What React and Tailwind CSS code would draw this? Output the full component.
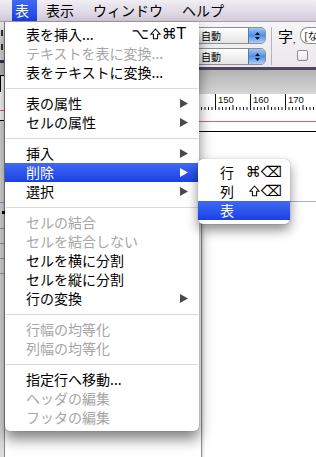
import React from "react";

function Shift({ white }) {
  return (
    <svg width="11" height="12" viewBox="0 0 11 12" className="inline-block mx-[1px] -mt-[2px] align-middle">
      <path d="M5.5 1 L10.3 6.3 H7.6 V10.8 H3.4 V6.3 H0.7 Z" fill="none" stroke={white ? "#fff" : "#111"} strokeWidth="1.1" strokeLinejoin="round" />
    </svg>
  );
}

const menuItems = [
  { label: "表を挿入...", shortcut: ["⌥", "shift", "⌘T"] },
  { label: "テキストを表に変換...", disabled: true },
  { label: "表をテキストに変換..." },
  "sep",
  { label: "表の属性", sub: true },
  { label: "セルの属性", sub: true },
  "sep",
  { label: "挿入", sub: true },
  { label: "削除", sub: true, active: true },
  { label: "選択", sub: true },
  "sep",
  { label: "セルの結合", disabled: true },
  { label: "セルを結合しない", disabled: true },
  { label: "セルを横に分割" },
  { label: "セルを縦に分割" },
  { label: "行の変換", sub: true },
  "sep",
  { label: "行幅の均等化", disabled: true },
  { label: "列幅の均等化", disabled: true },
  "sep",
  { label: "指定行へ移動..." },
  { label: "ヘッダの編集", disabled: true },
  { label: "フッタの編集", disabled: true },
];

const subItems = [
  { label: "行", shortcut: ["⌘⌫"] },
  { label: "列", shortcut: ["shift", "⌫"] },
  { label: "表", active: true },
];

function Shortcut({ keys, className }) {
  return (
    <span className={`font-['DejaVu_Sans',sans-serif] text-[15px] whitespace-nowrap ${className || ""}`}>
      {keys.map((k, i) => (k === "shift" ? <Shift key={i} /> : <span key={i}>{k}</span>))}
    </span>
  );
}

function Arrow({ white }) {
  return (
    <svg width="8" height="9" viewBox="0 0 8 9" className="shrink-0">
      <polygon points="0,0 8,4.5 0,9" fill={white ? "#ffffff" : "#4a4a4a"} />
    </svg>
  );
}

function MenuRow({ item }) {
  const color = item.active
    ? "text-white bg-gradient-to-b from-[#4169f3] to-[#1b3fe4]"
    : item.disabled
    ? "text-[#a6a6a6]"
    : "text-black";
  return (
    <div className={`h-[19px] flex items-center pl-[21px] pr-[11px] ${color}`}>
      <span className="flex-1 whitespace-nowrap">{item.label}</span>
      {item.shortcut && <Shortcut keys={item.shortcut} className="pr-[2px]" />}
      {item.sub && <Arrow white={item.active} />}
    </div>
  );
}

function Popup({ label }) {
  return (
    <div className="h-[17px] w-[76px] flex items-stretch rounded-[5px] border border-[#8e8e8e] bg-gradient-to-b from-white to-[#e4e4e4] overflow-hidden">
      <span className="flex-1 pl-[10px] text-[10px] leading-[15px]">{label}</span>
      <div className="w-[17px] flex flex-col items-center justify-center gap-[2px] bg-gradient-to-b from-[#9ec4f4] via-[#4f8fe6] to-[#a9d0f7] border-l border-[#5a79a8]">
        <svg width="5" height="3" viewBox="0 0 5 3"><polygon points="0,3 2.5,0 5,3" fill="#111" /></svg>
        <svg width="5" height="3" viewBox="0 0 5 3"><polygon points="0,0 5,0 2.5,3" fill="#111" /></svg>
      </div>
    </div>
  );
}

function Ruler() {
  const ticks = [];
  for (let i = 0; i < 90; i++) {
    const x = i * 3.5 + 0.5;
    const major = i % 10 === 0;
    const mid = i % 10 === 5;
    ticks.push(
      <line key={i} x1={x} x2={x} y1={major ? 0 : mid ? 11 : 13} y2={16} stroke="#111" strokeWidth="1" />
    );
  }
  // only the labels that show right of the open menu
  const labels = [6, 7, 8].map((i) => (
    <text key={i} x={i * 35 + 3} y={9} fontSize="9.5" fontFamily="Liberation Sans, Arial, sans-serif" fill="#111">
      {90 + i * 10}
    </text>
  ));
  return (
    <svg width="311" height="16" className="block bg-white">
      {ticks}
      {labels}
    </svg>
  );
}

export default function App() {
  return (
    <div className="relative w-[316px] h-[457px] overflow-hidden bg-white font-['Noto_Sans_CJK_JP','Noto_Sans',sans-serif] text-[14px] leading-[19px]">
      {/* MENU BAR */}
      <div className="h-[22px] flex items-stretch bg-gradient-to-b from-[#f1eef4] to-[#d3ccdb] border-b border-[#a8a0b2]">
        <div className="w-[12px]" />
        <div className="pl-[3px] pr-[8px] flex items-center bg-gradient-to-b from-[#4169f3] to-[#1b3fe4] text-white">表</div>
        <div className="pl-[9px] flex items-center">表示</div>
        <div className="pl-[19px] flex items-center">ウィンドウ</div>
        <div className="pl-[19px] flex items-center">ヘルプ</div>
      </div>

      {/* DOCUMENT WINDOW BEHIND */}
      <div className="flex h-[435px]">
        {/* left strip */}
        <div className="w-[5px] flex flex-col bg-[#dcdcdc] border-r border-[#8c8c8c]">
          <div className="h-[8px] bg-[#e9e9e9]" />
          <div className="h-[6px] mx-[1px] border-l-2 border-[#333]" />
          <div className="h-[8px]" />
          <div className="h-[6px] mx-[1px] border-l-2 border-[#333]" />
          <div className="h-[10px]" />
          <div className="h-[3px] bg-[#35354d]" />
          <div className="h-[12px] bg-[#bdbdbd]" />
          <div className="h-[17px] bg-white border-t border-l border-black" />
          <div className="h-[18px] bg-white" />
          <div className="h-px bg-[#d9636b]" />
          <div className="h-[9px] bg-white" />
          <div className="h-px bg-black" />
          <div className="h-[81px]" />
          <div className="h-px bg-[#8f8ff0]" />
          <div className="h-[8px]" />
          <div className="h-[3px] w-[3px] ml-[2px] bg-black" />
          <div className="h-[14px]" />
          <div className="h-px bg-[#9a9a9a]" />
          <div className="h-[14px]" />
          <div className="h-px bg-[#9a9a9a]" />
          <div className="h-[14px]" />
          <div className="h-px bg-[#9a9a9a]" />
          <div className="h-[14px]" />
          <div className="h-px bg-[#9a9a9a]" />
        </div>

        {/* main area */}
        <div className="flex-1 flex flex-col">
          {/* toolbar */}
          <div className="h-[45px] flex items-start pt-[5px] pl-[185px] bg-gradient-to-b from-[#f6f5f7] to-[#eae8ec] overflow-hidden">
            <div className="flex flex-col gap-[4px]">
              <Popup label="自動" />
              <Popup label="自動" />
            </div>
            <div className="ml-[5px] w-px h-[38px] bg-[#b4b4b4]" />
            <div className="ml-[6px] flex flex-col">
              <div className="h-[17px] flex items-center">
                <span className="text-[15px] leading-[17px]">字</span>
                <span className="text-[8px] leading-[8px] self-end">,</span>
                <div className="ml-[5px] h-[17px] w-[22px] rounded-l-[8px] border-y border-l border-[#8e8e8e] bg-white pl-[3px] text-[10px] leading-[15px] whitespace-nowrap overflow-hidden">
                  [な
                </div>
              </div>
              <div className="mt-[6px] flex items-center pl-[19px]">
                <div className="w-[11px] h-[11px] rounded-[2px] border border-[#8a8a8a] bg-gradient-to-b from-white to-[#e6e6e6]" />
              </div>
            </div>
          </div>
          <div className="h-[3px] bg-[#4f4560]" />
          <div className="h-[24px] bg-gradient-to-b from-[#b3b3b3] to-[#d6d6d6]" />
          <Ruler />
          {/* page */}
          <div className="h-[11px]" />
          <div className="h-px bg-[#d9636b]" />
          <div className="h-[9px]" />
          <div className="h-px bg-black" />
          <div className="h-[69px]" />
          <div className="h-px bg-[#a9a9f3]" />
          <div className="flex-1 flex">
            <div className="w-[196px]" />
            <div className="w-px bg-[#8f8f8f]" />
            <div className="w-[3px] bg-gradient-to-r from-[#dcdcdc] to-white" />
          </div>
        </div>
      </div>

      {/* MAIN DROPDOWN MENU */}
      <div className="absolute left-[5px] top-[22px] w-[194px] pt-[3px] pb-[4px] bg-white rounded-b-[5px] shadow-[0_8px_14px_rgba(0,0,0,0.5),0_0_1px_rgba(0,0,0,0.45)]">
        {menuItems.map((item, i) =>
          item === "sep" ? (
            <div key={i} className="h-[12px] flex items-center px-px">
              <div className="h-px w-full bg-[#dadada]" />
            </div>
          ) : (
            <MenuRow key={i} item={item} />
          )
        )}
      </div>

      {/* SUBMENU */}
      <div className="absolute left-[198px] top-[159px] w-[92px] pt-[4px] pb-[4px] bg-white rounded-[5px] shadow-[0_6px_12px_rgba(0,0,0,0.45),0_0_1px_rgba(0,0,0,0.45)]">
        {subItems.map((item, i) => (
          <div
            key={i}
            className={`h-[19px] flex items-center pl-[22px] pr-[8px] ${
              item.active ? "text-white bg-gradient-to-b from-[#4169f3] to-[#1b3fe4]" : "text-black"
            }`}
          >
            <span className="flex-1">{item.label}</span>
            {item.shortcut && <Shortcut keys={item.shortcut} />}
          </div>
        ))}
      </div>
    </div>
  );
}
